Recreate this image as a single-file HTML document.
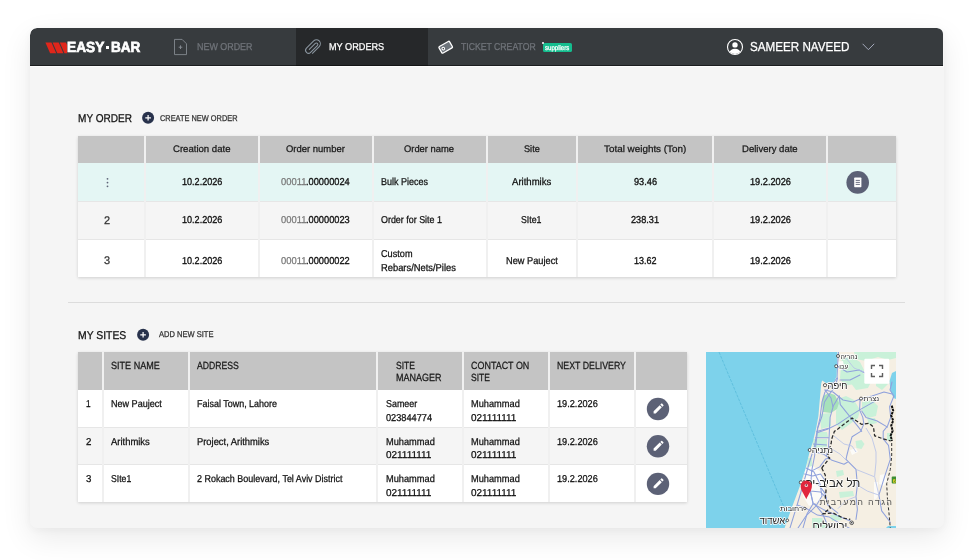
<!DOCTYPE html>
<html lang="en">
<head>
<meta charset="utf-8">
<title>Easy-Bar - My Orders</title>
<style>
*{box-sizing:border-box;margin:0;padding:0}
html,body{width:974px;height:560px;overflow:hidden;background:#fff}
body{font-family:"Liberation Sans","DejaVu Sans",sans-serif;color:#111;position:relative}
.card{position:absolute;left:30px;top:28px;width:914px;height:500px;background:#f5f5f5;border-radius:7px;box-shadow:0 10px 30px rgba(0,0,0,.085),0 2px 8px rgba(0,0,0,.035);overflow:hidden}
.in{position:absolute;left:-30px;top:-28px;width:974px;height:560px;will-change:transform}
.b{position:absolute}
.t{position:absolute;white-space:pre;line-height:1;transform-origin:0 50%;text-rendering:geometricPrecision}
.nav{left:30px;top:28px;width:913px;height:37.7px;background:#373b3e;border-radius:7px 6px 0 0}
.tab{left:296px;top:28px;width:132px;height:37.7px;background:#26282a}
.tbl{box-shadow:0 1px 3px rgba(0,0,0,.16)}
.hd{background:#c4c4c4}
.vl{background:#f0f0f0;width:1.3px;margin-left:.4px}
.hl{background:#e6e6e6;height:1px}
svg{position:absolute;overflow:visible}
</style>
</head>
<body>
<div class="card"><div class="in">

<!-- ===== NAV ===== -->
<div class="b nav"></div>
<div class="b tab"></div>
<div class="b" style="left:30px;top:64.7px;width:913px;height:1px;background:rgba(0,0,0,.5)"></div>
<div class="b" style="left:30px;top:65.7px;width:914px;height:1.2px;background:rgba(255,255,255,.75)"></div>
<!-- logo stripes -->
<svg style="left:45px;top:41.5px" width="23" height="12" viewBox="0 0 23 12">
 <g fill="#e0261b"><path d="M0.4 0.4h6.1l4.7 10.8H5.1z"/><path d="M7.6 0.4h6.1l4.7 10.8h-6.1z"/><path d="M14.8 0.4h6.1l1.2 2.700v8.100h-2.600z"/></g>
</svg>
<div class="b" style="left:105.6px;top:45.9px;width:3.3px;height:3.4px;background:#fff"></div>
<!-- new order icon -->
<svg style="left:173px;top:38px" width="16" height="18" viewBox="0 0 16 18" fill="none" stroke="#838990" stroke-width=".9">
 <path d="M1.5 1.4h7.6l4.4 4.4v10.8h-12z"/><path d="M7.5 7.4v3.6M5.7 9.2h3.6" stroke-width="1"/>
</svg>
<!-- paperclip icon -->
<svg style="left:303px;top:37px" width="20" height="20" viewBox="0 0 20 20" fill="none" stroke="#8b96a0" stroke-width="1.05" stroke-linecap="round">
 <g transform="translate(10.2 10) rotate(-45)"><path d="M-5 3.9L4.600 3.900A3.900 3.900 0 0 0 4.600-3.900L-5.600-3.900A2.900 2.900 0 0 0-5.600 1.900L4 1.900A1.450 1.450 0 0 0 4-1L-4.500-1"/></g>
</svg>
<!-- ticket icon -->
<svg style="left:437px;top:39px" width="18" height="16" viewBox="0 0 18 16">
 <g transform="rotate(-30 8.700 8.200)"><rect x="2.600" y="4.500" width="12.200" height="7.400" rx="1" fill="#6d747b" stroke="#fff" stroke-width="1.300"/><circle cx="5.900" cy="8.200" r="1.300" fill="#373b3e" stroke="#fff" stroke-width="1.100"/></g>
</svg>
<!-- suppliers badge -->
<div class="b" style="left:542.6px;top:43px;width:29.4px;height:9.4px;border-radius:1.6px;background:#14bd8e"></div>
<div class="b" style="left:541.6px;top:41.8px;width:2.2px;height:2.2px;border-radius:50%;background:#fff"></div>
<!-- user icon -->
<svg style="left:726px;top:38px" width="18" height="18" viewBox="0 0 18 18">
 <defs><clipPath id="uc"><circle cx="9" cy="9" r="7.1"/></clipPath></defs>
 <circle cx="9" cy="9" r="7.5" fill="none" stroke="#fff" stroke-width="1.1"/>
 <circle cx="9" cy="6.9" r="2.7" fill="#fff"/>
 <ellipse cx="9" cy="15.2" rx="5.6" ry="4.4" fill="#fff" clip-path="url(#uc)"/>
</svg>
<!-- chevron -->
<svg style="left:861px;top:42px" width="15" height="10" viewBox="0 0 15 10" fill="none" stroke="#a3a9ba" stroke-width="1">
 <path d="M1.6 1.8l5.8 5.9 5.8-5.9"/>
</svg>

<!-- ===== MY ORDER ===== -->
<svg style="left:141px;top:111px" width="14" height="14" viewBox="0 0 14 14"><circle cx="7.100" cy="6.800" r="6" fill="#28324c"/><path d="M7.100 4v5.600M4.300 6.800h5.600" stroke="#fff" stroke-width="1.200"/></svg>

<div class="b tbl" style="left:78px;top:136px;width:818px;height:141px;background:#fff"></div>
<div class="b hd" style="left:78px;top:136px;width:818px;height:27px"></div>
<div class="b" style="left:78px;top:163px;width:818px;height:38px;background:#e4f6f4"></div>
<div class="b" style="left:78px;top:201px;width:818px;height:38px;background:#f5f5f5"></div>
<div class="b" style="left:78px;top:239px;width:818px;height:38px;background:#fff"></div>
<div class="b hl" style="left:78px;top:201px;width:818px"></div>
<div class="b hl" style="left:78px;top:239px;width:818px"></div>
<div class="b vl" style="left:144px;top:136px;height:141px"></div>
<div class="b vl" style="left:258px;top:136px;height:141px"></div>
<div class="b vl" style="left:372px;top:136px;height:141px"></div>
<div class="b vl" style="left:486px;top:136px;height:141px"></div>
<div class="b vl" style="left:576px;top:136px;height:141px"></div>
<div class="b vl" style="left:712px;top:136px;height:141px"></div>
<div class="b vl" style="left:826px;top:136px;height:141px"></div>
<!-- kebab -->
<svg style="left:104.8px;top:176px" width="5" height="13" viewBox="0 0 5 13" fill="#5f6478"><circle cx="2.5" cy="2.8" r=".9"/><circle cx="2.5" cy="6.6" r=".9"/><circle cx="2.5" cy="10.3" r=".9"/></svg>
<!-- doc button -->
<svg style="left:846px;top:171px" width="24" height="24" viewBox="0 0 24 24"><circle cx="11.7" cy="11.4" r="11.3" fill="#5c6176"/><rect x="8.2" y="6.6" width="7.2" height="9.6" rx=".6" fill="#fff"/><path d="M9.7 9.4h4.2M9.7 11.4h4.2M9.7 13.4h4.2" stroke="#5c6176" stroke-width=".9"/></svg>

<!-- divider -->
<div class="b" style="left:68px;top:302px;width:837px;height:1px;background:#dcdcdc"></div>

<!-- ===== MY SITES ===== -->
<svg style="left:135.5px;top:327.5px" width="14" height="14" viewBox="0 0 14 14"><circle cx="7.100" cy="6.800" r="6" fill="#28324c"/><path d="M7.100 4v5.600M4.300 6.800h5.600" stroke="#fff" stroke-width="1.200"/></svg>

<div class="b tbl" style="left:78px;top:352px;width:609px;height:150px;background:#fff"></div>
<div class="b hd" style="left:78px;top:352px;width:609px;height:38px"></div>
<div class="b" style="left:78px;top:427px;width:609px;height:37px;background:#f5f5f5"></div>
<div class="b hl" style="left:78px;top:427px;width:609px"></div>
<div class="b hl" style="left:78px;top:464px;width:609px"></div>
<div class="b vl" style="left:102px;top:352px;height:150px"></div>
<div class="b vl" style="left:188px;top:352px;height:150px"></div>
<div class="b vl" style="left:376px;top:352px;height:150px"></div>
<div class="b vl" style="left:462px;top:352px;height:150px"></div>
<div class="b vl" style="left:548px;top:352px;height:150px"></div>
<div class="b vl" style="left:634px;top:352px;height:150px"></div>
<!-- pencil buttons -->
<svg style="left:646px;top:397px" width="24" height="100" viewBox="0 0 24 100">
 <defs><g id="pen"><circle cx="12" cy="12" r="11.2" fill="#5c6176"/><path d="M7.6 14.3v2.1h2.1l6.1-6.1-2.1-2.1zM17.4 8.7a.56.56 0 0 0 0-.8l-1.3-1.3a.56.56 0 0 0-.8 0l-1 1 2.1 2.1z" fill="#fff"/></g></defs>
 <use href="#pen" y="0"/><use href="#pen" y="37.3"/><use href="#pen" y="74.9"/>
</svg>

<!-- ===== MAP ===== -->
<svg style="left:706px;top:352px;overflow:hidden" width="190" height="176" viewBox="0 0 190 176" font-family='"Liberation Sans","DejaVu Sans",sans-serif'>
 <rect width="190" height="176" fill="#f5efe3"/>
 <!-- green areas -->
 <g fill="#c9f1d9">
  <path d="M148 0h42v6l-8 2-10-3-12 4-10-2z"/>
  <path d="M136 6l10-1 8 5 4 8-2 8-8 6-10 2-4-8 1-12z"/>
  <path d="M146 20l14 2 6 6-4 8-12 2-6-8z"/>
  <path d="M132 47l8-3 8 4 6 10-2 8-8 6-8 6-6-6 0-12z"/>
  <path d="M156 50l10-2 6 6-2 10-8 2-6-6z"/>
  <path d="M161 66l8 0 2 5-8 2z"/>
  <path d="M114 62l10-1 1 13-10 3z"/>
  <path d="M110 80l11 0 1 5-12 1z"/>
  <path d="M106 87l15 0 0 9-14 2z"/>
  <path d="M149.500 89l6-1 3 4-3 5-5-1z"/>
  <path d="M181 81l5 0 0 8-5-1z"/>
  <path d="M102 106l4 0 0 9-5 0z"/>
  <path d="M130 119l7-1 1 5-7 2z"/>
  <path d="M110 133l4 0 1 10-5 0z"/>
  <path d="M133 140l14-1 1 5-14 2z"/>
  <path d="M124 163l10 0 2 5-10 1z"/>
  <path d="M106 166l10 0 6 10h-16z"/>
  <path d="M170 28l8-2 4 6-6 6-6-4z"/>
 </g>
 <path d="M117 44l6-3 6 2 4 8-2 6-6 4-8-1-1-8z" fill="#a7e1bb"/>
 <!-- pale patches -->
 <g fill="#fcfbf8"><path d="M120 20l6-2 3 8-7 4z"/><path d="M129 10l8-1 1 5-8 2z"/><path d="M97 116l10-2 8 6 4 14-4 14-12 6-6-10 2-16z"/><path d="M174 123l5-1 2 6-3 6-5-2z"/><path d="M144 98l6-2 2 4-6 3z"/><path d="M168 130l4 0 0 14-4 6z"/></g>
 <!-- sea of galilee / dead sea -->
 <path d="M190 19l-4 2-2.500 8 1 10 3 7 2.500 1z" fill="#7dd2eb"/>
 <path d="M180 176l2-2h8v2z" fill="#7dd2eb"/>
 <!-- roads -->
 <g fill="none" stroke="#8fa1dc" stroke-width="1.050" stroke-linejoin="round" stroke-linecap="round">
  <path d="M132.500 0l-1 14-.500 12-6 8-6 6-3 10-2 16-2.400 10-3.200 19-3 9-3.600 12-5.700 20-5 17-7.100 23"/>
  <path d="M131.500 26l-2 8-6 8-5 8-2.500 14-4.200 12-3.200 28-2.900 14.900-1.400 20 2.800 12.800"/>
  <path d="M119 38l6 8 2 9-2.900 10.400-1.100 21.500-.500 8.500-2.100 8.600"/>
  <path d="M126.800 54.700l6.400-10.700"/>
  <path d="M133.200 44l1.100 8.600 8.600 10.700 9.600 11.800 3.200 4.300"/>
  <path d="M154.100 47.200l-.5 10.700 3.200 7.500 1.100 6.500-3.200 7.500-8.600 5.300-3.200 10.700-2.200 8.600-.7 3.400 10 10 1.400 15.700-1.400 11.500 1.400 12.800-1.400 10"/>
  <path d="M168.600 49.400l-15 8.500-11.800 7.500-9.600 6.500-10.800 5.300-9.600 3.200"/>
  <path d="M155.700 59l4.300 6.400 10.700 3.300 10.800 6.400"/>
  <path d="M187.900 44l-4.300 10.700 1.100 10.700-3.200 8.600-4.300 5.400 0 7.500 5.300 6.400 .4 2.700 1.400 11.400-5.700 17.200-5.700 18.500 2.800 15.800 8.600 11.400"/>
  <path d="M186 30l-2 8 3.900 6"/>
  <path d="M119 38l8 2 10 8 10 2 7-3 12-3 12-4 8 2"/>
  <path d="M131 14l10 6 12-2 8 4"/>
  <path d="M134 28l10 0 10-5"/>
  <path d="M110.700 79.400l11.800-3.200"/><path d="M109.600 85.800h12.900"/><path d="M107.500 92l13 1"/>
  <path d="M104.300 138.900l2.800 12.800 10 5.700 12.900 5.700 14.300 5.800"/>
  <path d="M112.900 133.100l6 8 3 12 10 8"/>
  <path d="M98.600 122l8 2 8-2 4 6"/>
  <path d="M96.400 136l8 2.900 10 1 6 6"/>
  <path d="M100 116l8 4 6 12 2 12-6 10-10 10-8 12"/>
  <path d="M91.400 153.100l10 4 10 6 12 2 10 6 10 5"/>
  <path d="M107.100 151.700l-6 10-4 14"/>
  <path d="M108.600 151.700l8 10 6 14"/>
  <path d="M105.700 118.900l8-4 6-8 4-1"/>
  <path d="M110 100.300l8 2 8 6 12 4 3.400-2"/>
 </g>
 <g fill="none" stroke="#b4c0e9" stroke-width=".8" stroke-linejoin="round">
  <path d="M160 76l6 10 4 14 0 10-1.400 14.600 4.300 18.500"/>
  <path d="M128 84l10 8 8 2 4 6"/>
  <path d="M150 117.400l10 4 8 3.200"/>
  <path d="M151.400 133.100l10 6 11.500 4"/>
  <path d="M140 6l8 10 10 4"/>
  <path d="M124 96l10 6 8 8"/>
  <path d="M150 144.600l-10 4-8 8"/>
 </g>
 <!-- sea -->
 <path d="M0 0h131.400l-.4 10-.400 14-2 5-4 2.500-4.500-.500-4-2.400-1 3.400-.500 7 -1 11-1.200 14-2.200 12-3.400 14-3.200 10-4.300 17.400-5 15.700-8.600 22.900-7.100 20h-79z" fill="#7dd2eb"/>
 <path d="M13 0l67 160" fill="none" stroke="#56b9d9" stroke-width=".75" stroke-dasharray="3 1.200"/>
 <!-- borders -->
 <g fill="none" stroke="#2a2a2a" stroke-width="1.250" stroke-dasharray="3.600 2">
  <path d="M115.700 116l7.900-10 -2.200-2 3.800-12.800.500-4.300 2.700-7.500 3.800-2.700 13.900-10.700 9.600 6.400 7.500-1.100 4.300 3.800 1.100 8.600 8.600 3.200 7.500 2.100"/>
  <path d="M115.700 116l3.600 7.100.7 15.800-.7 7.100 5 10-7.200 5.700 10-.7 10 5 7.200 1.400"/>
 </g>
 <path d="M185.700 53.600l1.500 5-2 5 2 5-2 5 1.500 5-2 5 1.200 5.400" fill="none" stroke="#111" stroke-width="2" stroke-dasharray="2.600 .7"/>
 <path d="M185.700 91l0 13 -1.400 13.400-3.600 14.300.7 14.300 1.500 14.300 1.400 15.700" fill="none" stroke="#333" stroke-width="1" stroke-dasharray="3 2"/>
 <!-- shield -->
 <rect x="185.700" y="124.600" width="6" height="7" rx="1" fill="#3f8f33"/>
 <text x="186.700" y="130.600" font-size="5.500" font-weight="700" fill="#f4d21f">6</text>
 <!-- city dots -->
 <g fill="#fff" stroke="#333" stroke-width=".8">
  <circle cx="132" cy="4" r="1.500"/><circle cx="130.200" cy="14.200" r="1.500"/><circle cx="119" cy="33.200" r="1.600"/><circle cx="155" cy="46.600" r="1.500"/>
  <circle cx="103.700" cy="98" r="1.500"/><circle cx="95" cy="130.400" r="1.700"/><circle cx="98.800" cy="156.500" r="1.200"/><circle cx="81.300" cy="168.300" r="1.300"/>
  <circle cx="145.700" cy="170.800" r="1.800"/>
 </g>
 <circle cx="145.700" cy="170.800" r=".8" fill="#333"/>
 <!-- labels -->
 <g fill="#222" stroke="#fff" stroke-width="1.500" paint-order="stroke" stroke-linejoin="round" direction="rtl" unicode-bidi="embed">
  <text x="151.500" y="6.700" font-size="7.400" textLength="17" lengthAdjust="spacingAndGlyphs">נהריה</text>
  <text x="142.300" y="17" font-size="7.400" textLength="9" lengthAdjust="spacingAndGlyphs">עכו</text>
  <text x="141.500" y="37.400" font-size="10.200" textLength="20" lengthAdjust="spacingAndGlyphs">חיפה</text>
  <text x="173" y="49.400" font-size="7.400" textLength="15.500" lengthAdjust="spacingAndGlyphs">נצרת</text>
  <text x="127.100" y="101.200" font-size="8.600" textLength="21.300" lengthAdjust="spacingAndGlyphs">נתניה</text>
  <text x="154.400" y="134.600" font-size="12.200" textLength="58" lengthAdjust="spacingAndGlyphs">תל אביב-יפו</text>
  <text x="97.100" y="159" font-size="7.300" textLength="23" lengthAdjust="spacingAndGlyphs">רחובות</text>
  <text x="79.200" y="171.900" font-size="9.400" textLength="25.700" lengthAdjust="spacingAndGlyphs">אשדוד</text>
  <text x="141.400" y="177.600" font-size="12.200" textLength="35" lengthAdjust="spacingAndGlyphs">ירושלים</text>
 </g>
 <text x="186" y="153" font-size="9" fill="#555" stroke="#f5efe3" stroke-width=".8" paint-order="stroke" direction="rtl" unicode-bidi="embed" textLength="72.400" lengthAdjust="spacing">הגדה המערבית</text>
 <!-- marker -->
 <path d="M100.300 147.200c-1.500-3.900-5.600-8.600-5.600-13.200a5.600 5.600 0 0 1 11.200 0c0 4.600-4.100 9.300-5.600 13.200z" fill="#e1253c"/>
 <circle cx="100.300" cy="133.400" r="1.700" fill="#f6c9cf"/><circle cx="100.300" cy="133" r=".8" fill="#3a0c12"/>
 <!-- fullscreen button -->
 <rect x="158.300" y="6.800" width="25" height="25" rx="1.200" fill="#fff"/>
 <path d="M165.500 17v-3.500h3.500M173 13.500h3.500v3.500M176.500 21v3.500h-3.500M169 24.500h-3.500v-3.500" fill="none" stroke="#5f5f5f" stroke-width="1.400"/>
</svg>


<!-- ===== TEXT ===== -->
<span class="t" style="left:67.1px;top:41.0px;font-size:14.6px;color:#fff;font-weight:700;transform:scaleX(0.938);-webkit-text-stroke:.7px #fff">EASY</span>
<span class="t" style="left:111.1px;top:41.0px;font-size:14.6px;color:#fff;font-weight:700;transform:scaleX(0.930);-webkit-text-stroke:.7px #fff">BAR</span>
<span class="t" style="left:196.8px;top:43.0px;font-size:10px;color:#70747a;transform:scaleX(0.892);-webkit-text-stroke:.26px #70747a;">NEW ORDER</span>
<span class="t" style="left:328.8px;top:43.0px;font-size:10px;color:#fff;transform:scaleX(0.914);-webkit-text-stroke:.26px #fff;">MY ORDERS</span>
<span class="t" style="left:461.3px;top:43.0px;font-size:10px;color:#70747a;transform:scaleX(0.867);-webkit-text-stroke:.26px #70747a;">TICKET CREATOR</span>
<span class="t" style="left:545.3px;top:46.0px;font-size:6.8px;color:#fff;transform:scaleX(0.893);-webkit-text-stroke:.26px #fff;">suppliers</span>
<span class="t" style="left:749.9px;top:40.0px;font-size:13px;color:#fff;transform:scaleX(0.896);-webkit-text-stroke:.26px #fff;">SAMEER NAVEED</span>
<span class="t" style="left:78.0px;top:114.0px;font-size:11.3px;color:#111;transform:scaleX(0.890);-webkit-text-stroke:.26px #111;">MY ORDER</span>
<span class="t" style="left:159.5px;top:114.0px;font-size:8.4px;color:#333;transform:scaleX(0.883);-webkit-text-stroke:.26px #333;">CREATE NEW ORDER</span>
<span class="t" style="left:173.2px;top:145.0px;font-size:9.5px;color:#1a1a1a;transform:scaleX(1.008);-webkit-text-stroke:.26px #1a1a1a;">Creation date</span>
<span class="t" style="left:286.2px;top:145.0px;font-size:9.5px;color:#1a1a1a;transform:scaleX(0.994);-webkit-text-stroke:.26px #1a1a1a;">Order number</span>
<span class="t" style="left:404.2px;top:145.0px;font-size:9.5px;color:#1a1a1a;transform:scaleX(0.986);-webkit-text-stroke:.26px #1a1a1a;">Order name</span>
<span class="t" style="left:523.8px;top:145.0px;font-size:9.5px;color:#1a1a1a;transform:scaleX(0.965);-webkit-text-stroke:.26px #1a1a1a;">Site</span>
<span class="t" style="left:604.2px;top:145.0px;font-size:9.5px;color:#1a1a1a;transform:scaleX(1.039);-webkit-text-stroke:.26px #1a1a1a;">Total weights (Ton)</span>
<span class="t" style="left:742.3px;top:145.0px;font-size:9.5px;color:#1a1a1a;transform:scaleX(1.004);-webkit-text-stroke:.26px #1a1a1a;">Delivery date</span>
<span class="t" style="left:181.8px;top:178.0px;font-size:10px;color:#111;transform:scaleX(0.908);-webkit-text-stroke:.32px #111">10.2.2026</span>
<span class="t" style="left:280.8px;top:178.0px;font-size:10px;color:#7a7a7a;transform:scaleX(0.938);-webkit-text-stroke:.26px #7a7a7a;">00011</span>
<span class="t" style="left:306.2px;top:178.0px;font-size:10px;color:#111;transform:scaleX(0.926);-webkit-text-stroke:.32px #111">.00000024</span>
<span class="t" style="left:750.0px;top:178.0px;font-size:10px;color:#111;transform:scaleX(0.919);-webkit-text-stroke:.32px #111">19.2.2026</span>
<span class="t" style="left:181.8px;top:216.0px;font-size:10px;color:#111;transform:scaleX(0.908);-webkit-text-stroke:.32px #111">10.2.2026</span>
<span class="t" style="left:280.8px;top:216.0px;font-size:10px;color:#7a7a7a;transform:scaleX(0.938);-webkit-text-stroke:.26px #7a7a7a;">00011</span>
<span class="t" style="left:306.2px;top:216.0px;font-size:10px;color:#111;transform:scaleX(0.926);-webkit-text-stroke:.32px #111">.00000023</span>
<span class="t" style="left:750.0px;top:216.0px;font-size:10px;color:#111;transform:scaleX(0.919);-webkit-text-stroke:.32px #111">19.2.2026</span>
<span class="t" style="left:181.8px;top:257.0px;font-size:10px;color:#111;transform:scaleX(0.908);-webkit-text-stroke:.32px #111">10.2.2026</span>
<span class="t" style="left:280.8px;top:257.0px;font-size:10px;color:#7a7a7a;transform:scaleX(0.938);-webkit-text-stroke:.26px #7a7a7a;">00011</span>
<span class="t" style="left:306.2px;top:257.0px;font-size:10px;color:#111;transform:scaleX(0.926);-webkit-text-stroke:.32px #111">.00000022</span>
<span class="t" style="left:750.0px;top:257.0px;font-size:10px;color:#111;transform:scaleX(0.919);-webkit-text-stroke:.32px #111">19.2.2026</span>
<span class="t" style="left:104.4px;top:216.0px;font-size:11px;color:#333;transform:scaleX(0.996);-webkit-text-stroke:.26px #333;">2</span>
<span class="t" style="left:104.4px;top:256.0px;font-size:11px;color:#333;transform:scaleX(0.996);-webkit-text-stroke:.26px #333;">3</span>
<span class="t" style="left:381.0px;top:178.0px;font-size:10px;color:#111;transform:scaleX(0.900);-webkit-text-stroke:.26px #111;">Bulk Pieces</span>
<span class="t" style="left:381.0px;top:216.0px;font-size:10px;color:#111;transform:scaleX(0.892);-webkit-text-stroke:.26px #111;">Order for Site 1</span>
<span class="t" style="left:381.0px;top:250.0px;font-size:10px;color:#111;transform:scaleX(0.914);-webkit-text-stroke:.26px #111;">Custom</span>
<span class="t" style="left:381.0px;top:264.0px;font-size:10px;color:#111;transform:scaleX(0.935);-webkit-text-stroke:.26px #111;">Rebars/Nets/Piles</span>
<span class="t" style="left:512.0px;top:178.0px;font-size:10px;color:#111;transform:scaleX(0.956);-webkit-text-stroke:.26px #111;">Arithmiks</span>
<span class="t" style="left:520.8px;top:216.0px;font-size:10px;color:#111;transform:scaleX(0.878);-webkit-text-stroke:.26px #111;">SIte1</span>
<span class="t" style="left:505.8px;top:257.0px;font-size:10px;color:#111;transform:scaleX(0.923);-webkit-text-stroke:.26px #111;">New Pauject</span>
<span class="t" style="left:633.8px;top:178.0px;font-size:10px;color:#111;transform:scaleX(0.919);-webkit-text-stroke:.32px #111">93.46</span>
<span class="t" style="left:630.8px;top:216.0px;font-size:10px;color:#111;transform:scaleX(0.915);-webkit-text-stroke:.32px #111">238.31</span>
<span class="t" style="left:634.3px;top:257.0px;font-size:10px;color:#111;transform:scaleX(0.899);-webkit-text-stroke:.32px #111">13.62</span>
<span class="t" style="left:78.0px;top:331.0px;font-size:11.3px;color:#111;transform:scaleX(0.919);-webkit-text-stroke:.26px #111;">MY SITES</span>
<span class="t" style="left:159.3px;top:330.0px;font-size:8.4px;color:#333;transform:scaleX(0.901);-webkit-text-stroke:.26px #333;">ADD NEW SITE</span>
<span class="t" style="left:111.3px;top:362.0px;font-size:10.4px;color:#1a1a1a;transform:scaleX(0.871);-webkit-text-stroke:.26px #1a1a1a;">SITE NAME</span>
<span class="t" style="left:197.0px;top:362.0px;font-size:10.4px;color:#1a1a1a;transform:scaleX(0.832);-webkit-text-stroke:.26px #1a1a1a;">ADDRESS</span>
<span class="t" style="left:396.1px;top:362.0px;font-size:10.4px;color:#1a1a1a;transform:scaleX(0.818);-webkit-text-stroke:.26px #1a1a1a;">SITE</span>
<span class="t" style="left:396.1px;top:374.0px;font-size:10.4px;color:#1a1a1a;transform:scaleX(0.864);-webkit-text-stroke:.26px #1a1a1a;">MANAGER</span>
<span class="t" style="left:471.3px;top:362.0px;font-size:10.4px;color:#1a1a1a;transform:scaleX(0.861);-webkit-text-stroke:.26px #1a1a1a;">CONTACT ON</span>
<span class="t" style="left:471.3px;top:374.0px;font-size:10.4px;color:#1a1a1a;transform:scaleX(0.818);-webkit-text-stroke:.26px #1a1a1a;">SITE</span>
<span class="t" style="left:557.0px;top:362.0px;font-size:10.4px;color:#1a1a1a;transform:scaleX(0.845);-webkit-text-stroke:.26px #1a1a1a;">NEXT DELIVERY</span>
<span class="t" style="left:85.8px;top:400.0px;font-size:10px;color:#111;transform:scaleX(0.827);-webkit-text-stroke:.26px #111;">1</span>
<span class="t" style="left:111.3px;top:400.0px;font-size:10px;color:#111;transform:scaleX(0.905);-webkit-text-stroke:.26px #111;">New Pauject</span>
<span class="t" style="left:197.0px;top:400.0px;font-size:10px;color:#111;transform:scaleX(0.896);-webkit-text-stroke:.26px #111;">Faisal Town, Lahore</span>
<span class="t" style="left:385.6px;top:400.0px;font-size:10px;color:#111;transform:scaleX(0.891);-webkit-text-stroke:.26px #111;">Sameer</span>
<span class="t" style="left:385.6px;top:414.0px;font-size:10px;color:#111;transform:scaleX(0.921);-webkit-text-stroke:.26px #111;">023844774</span>
<span class="t" style="left:471.3px;top:400.0px;font-size:10px;color:#111;transform:scaleX(0.924);-webkit-text-stroke:.26px #111;">Muhammad</span>
<span class="t" style="left:471.3px;top:414.0px;font-size:10px;color:#111;transform:scaleX(0.995);-webkit-text-stroke:.26px #111;">021111111</span>
<span class="t" style="left:557.0px;top:400.0px;font-size:10px;color:#111;transform:scaleX(0.917);-webkit-text-stroke:.26px #111;">19.2.2026</span>
<span class="t" style="left:85.8px;top:438.0px;font-size:10px;color:#111;transform:scaleX(0.971);-webkit-text-stroke:.26px #111;">2</span>
<span class="t" style="left:111.3px;top:438.0px;font-size:10px;color:#111;transform:scaleX(0.943);-webkit-text-stroke:.26px #111;">Arithmiks</span>
<span class="t" style="left:197.0px;top:438.0px;font-size:10px;color:#111;transform:scaleX(0.936);-webkit-text-stroke:.26px #111;">Project, Arithmiks</span>
<span class="t" style="left:385.6px;top:438.0px;font-size:10px;color:#111;transform:scaleX(0.924);-webkit-text-stroke:.26px #111;">Muhammad</span>
<span class="t" style="left:385.6px;top:451.0px;font-size:10px;color:#111;transform:scaleX(0.995);-webkit-text-stroke:.26px #111;">021111111</span>
<span class="t" style="left:471.3px;top:438.0px;font-size:10px;color:#111;transform:scaleX(0.924);-webkit-text-stroke:.26px #111;">Muhammad</span>
<span class="t" style="left:471.3px;top:451.0px;font-size:10px;color:#111;transform:scaleX(0.995);-webkit-text-stroke:.26px #111;">021111111</span>
<span class="t" style="left:557.0px;top:438.0px;font-size:10px;color:#111;transform:scaleX(0.917);-webkit-text-stroke:.26px #111;">19.2.2026</span>
<span class="t" style="left:85.8px;top:475.0px;font-size:10px;color:#111;transform:scaleX(0.971);-webkit-text-stroke:.26px #111;">3</span>
<span class="t" style="left:111.3px;top:475.0px;font-size:10px;color:#111;transform:scaleX(0.865);-webkit-text-stroke:.26px #111;">SIte1</span>
<span class="t" style="left:197.0px;top:475.0px;font-size:10px;color:#111;transform:scaleX(0.895);-webkit-text-stroke:.26px #111;">2 Rokach Boulevard, Tel Aviv District</span>
<span class="t" style="left:385.6px;top:475.0px;font-size:10px;color:#111;transform:scaleX(0.924);-webkit-text-stroke:.26px #111;">Muhammad</span>
<span class="t" style="left:385.6px;top:489.0px;font-size:10px;color:#111;transform:scaleX(0.995);-webkit-text-stroke:.26px #111;">021111111</span>
<span class="t" style="left:471.3px;top:475.0px;font-size:10px;color:#111;transform:scaleX(0.924);-webkit-text-stroke:.26px #111;">Muhammad</span>
<span class="t" style="left:471.3px;top:489.0px;font-size:10px;color:#111;transform:scaleX(0.995);-webkit-text-stroke:.26px #111;">021111111</span>
<span class="t" style="left:557.0px;top:475.0px;font-size:10px;color:#111;transform:scaleX(0.917);-webkit-text-stroke:.26px #111;">19.2.2026</span>

</div></div>
</body>
</html>
